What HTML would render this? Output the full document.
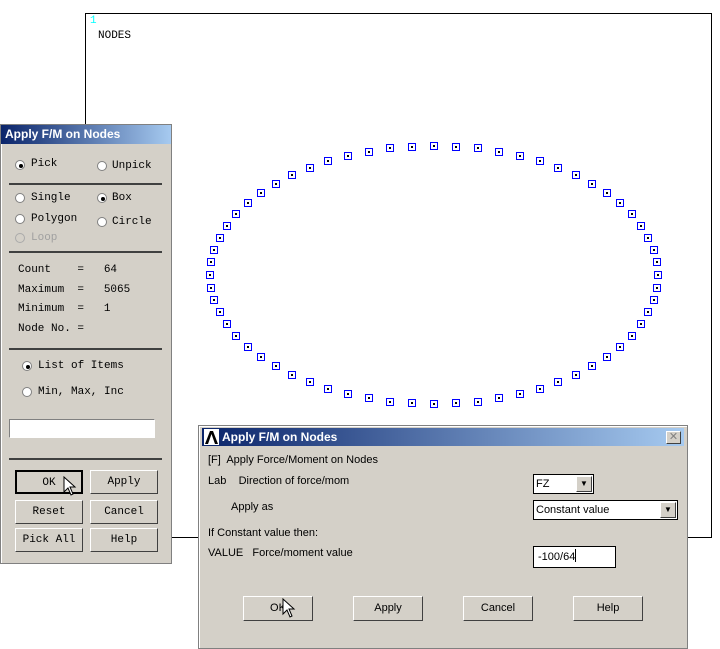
<!DOCTYPE html>
<html><head><meta charset="utf-8"><style>
body{margin:0;width:720px;height:649px;background:#fff;position:relative;overflow:hidden;font-family:"Liberation Sans",sans-serif}
.abs{position:absolute}
.mono{font-family:"Liberation Mono",monospace;font-size:11px;color:#000}
.main{left:85px;top:13px;width:625px;height:523px;border:1px solid #000;background:#fff}
.dlg{background:#d4d0c8;border:1px solid #808080;box-shadow:inset 1px 1px #fff}
.title{height:19px;color:#fff;font-weight:bold;font-size:12px;line-height:19px;padding-left:4px;background:linear-gradient(90deg,#0a246a,#a6caf0)}
.sep{position:absolute;left:8px;width:153px;height:2px;background:#404040}
.rad{position:absolute;width:10px;height:10px;border-radius:50%;background:#fff;border:1px solid #808080;box-sizing:border-box}
.rad.on::after{content:"";position:absolute;left:3px;top:3px;width:4px;height:4px;background:#000;border-radius:50%}
.btn{position:absolute;border:1px solid;border-color:#fff #404040 #404040 #fff;background:#d4d0c8;text-align:center;box-sizing:border-box}
.lb{position:absolute;font-size:11px;color:#000}
.pre{white-space:pre;line-height:19.5px}
</style></head><body>
<div class="abs main"></div>
<div class="abs mono" style="left:90px;top:15px;color:#0ff">1</div>
<div class="abs mono" style="left:98px;top:30px">NODES</div>
<svg class="abs" style="left:0;top:0" width="720" height="649" id="s"></svg>

<div class="abs dlg" style="left:0;top:124px;width:170px;height:438px">
<div class="title">Apply F/M on Nodes</div>
<div class="rad on" style="left:14px;top:35px"></div><div class="abs mono" style="left:30px;top:33px">Pick</div>
<div class="rad" style="left:96px;top:36px"></div><div class="abs mono" style="left:111px;top:35px">Unpick</div>
<div class="sep" style="top:58px"></div>
<div class="rad" style="left:14px;top:68px"></div><div class="abs mono" style="left:30px;top:67px">Single</div>
<div class="rad on" style="left:96px;top:68px"></div><div class="abs mono" style="left:111px;top:67px">Box</div>
<div class="rad" style="left:14px;top:89px"></div><div class="abs mono" style="left:30px;top:88px">Polygon</div>
<div class="rad" style="left:96px;top:92px"></div><div class="abs mono" style="left:111px;top:91px">Circle</div>
<div class="rad" style="left:14px;top:108px;border-color:#aaa;background:#d4d0c8"></div><div class="abs mono" style="left:30px;top:107px;color:#a0a0a0">Loop</div>
<div class="sep" style="top:126px"></div>
<div class="abs mono pre" style="left:17px;top:136px">Count    =   64
Maximum  =   5065
Minimum  =   1
Node No. =</div>
<div class="sep" style="top:223px"></div>
<div class="rad on" style="left:21px;top:236px"></div><div class="abs mono" style="left:37px;top:235px">List of Items</div>
<div class="rad" style="left:21px;top:262px"></div><div class="abs mono" style="left:37px;top:261px">Min, Max, Inc</div>
<div class="abs" style="left:8px;top:294px;width:146px;height:19px;background:#fff;border:1px solid;border-color:#808080 #fff #fff #808080;box-sizing:border-box"></div>
<div class="sep" style="top:333px"></div>
<div class="btn mono" style="left:14px;top:345px;width:68px;height:24px;line-height:22px;border:2px solid #000">OK</div>
<div class="btn mono" style="left:89px;top:345px;width:68px;height:24px;line-height:22px">Apply</div>
<div class="btn mono" style="left:14px;top:375px;width:68px;height:24px;line-height:22px">Reset</div>
<div class="btn mono" style="left:89px;top:375px;width:68px;height:24px;line-height:22px">Cancel</div>
<div class="btn mono" style="left:14px;top:403px;width:68px;height:24px;line-height:22px">Pick All</div>
<div class="btn mono" style="left:89px;top:403px;width:68px;height:24px;line-height:22px">Help</div>
</div>

<div class="abs dlg" style="left:198px;top:425px;width:488px;height:222px">
<div class="title" style="margin:2px 3px 0 3px;padding-left:20px;height:18px;line-height:18px">Apply F/M on Nodes</div>
<div class="abs" style="left:5px;top:3px;width:15px;height:16px;background:#fff"><svg width="15" height="16"><path d="M1 15 L6 2 L9 2 L14 15 L11 15 L7.5 5 L4 15Z" fill="#000"/></svg></div>
<div class="btn" style="left:467px;top:5px;width:15px;height:13px;font-size:11px;line-height:10px;color:#808080">✕</div>
<div class="lb" style="left:9px;top:28px">[F]&nbsp; Apply Force/Moment on Nodes</div>
<div class="lb" style="left:9px;top:49px">Lab &nbsp;&nbsp; Direction of force/mom</div>
<div class="lb" style="left:32px;top:75px">Apply as</div>
<div class="lb" style="left:9px;top:101px">If Constant value then:</div>
<div class="lb" style="left:9px;top:121px">VALUE &nbsp; Force/moment value</div>
<div class="abs" style="left:334px;top:48px;width:61px;height:20px;background:#fff;border:1px solid #000;box-sizing:border-box;font-size:11px;line-height:18px;padding-left:2px">FZ</div>
<div class="btn" style="left:377px;top:50px;width:16px;height:16px;font-size:8px;line-height:14px">▼</div>
<div class="abs" style="left:334px;top:74px;width:145px;height:20px;background:#fff;border:1px solid #000;box-sizing:border-box;font-size:11px;line-height:18px;padding-left:2px">Constant value</div>
<div class="btn" style="left:461px;top:76px;width:16px;height:16px;font-size:8px;line-height:14px">▼</div>
<div class="abs" style="left:334px;top:120px;width:83px;height:22px;background:#fff;border:1px solid #000;box-sizing:border-box;font-size:11px;line-height:20px;padding-left:4px">-100/64<span style="display:inline-block;width:1px;height:13px;background:#000;vertical-align:-2px"></span></div>
<div class="btn" style="left:44px;top:170px;width:70px;height:25px;font-size:11px;line-height:23px">OK</div>
<div class="btn" style="left:154px;top:170px;width:70px;height:25px;font-size:11px;line-height:23px">Apply</div>
<div class="btn" style="left:264px;top:170px;width:70px;height:25px;font-size:11px;line-height:23px">Cancel</div>
<div class="btn" style="left:374px;top:170px;width:70px;height:25px;font-size:11px;line-height:23px">Help</div>
</div>
<svg class="abs" style="left:63px;top:476px" width="14" height="22"><path d="M1 1 L1 16 L5 12 L8 19 L10 18 L7 11 L12 11Z" fill="#fff" stroke="#000"/></svg>
<svg class="abs" style="left:282px;top:598px" width="14" height="22"><path d="M1 1 L1 16 L5 12 L8 19 L10 18 L7 11 L12 11Z" fill="#fff" stroke="#000"/></svg>
<script>
var s=document.getElementById('s'),h='';
for(var i=0;i<64;i++){var a=i*Math.PI*2/64;var x=Math.round(433+224*Math.sin(a)),y=Math.round(274-129*Math.cos(a));
h+='<rect x="'+(x-3)+'.5" y="'+(y-3)+'.5" width="7" height="7" fill="none" stroke="#00f"/><rect x="'+(x)+'" y="'+(y)+'" width="2" height="2" fill="#000"/>';}
s.innerHTML=h;
</script>
</body></html>
